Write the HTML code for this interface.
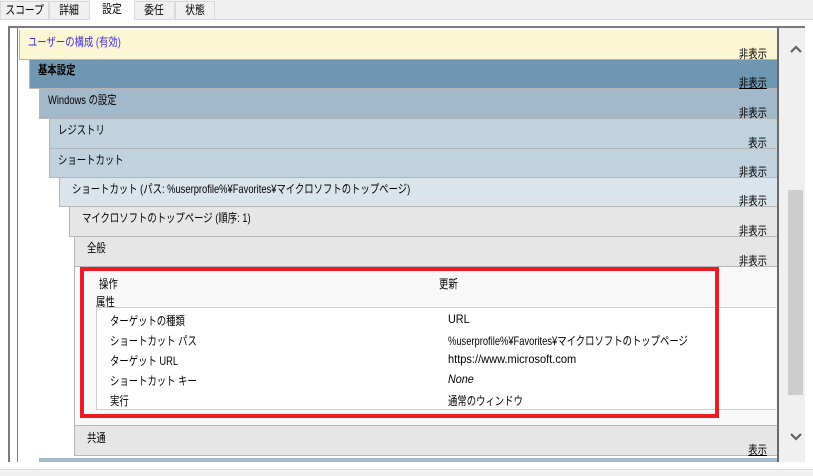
<!DOCTYPE html>
<html><head><meta charset="utf-8"><style>
*{margin:0;padding:0;box-sizing:border-box}
body{width:813px;height:476px;background:#fff;position:relative;overflow:hidden;font-family:"Liberation Sans","Noto Sans CJK JP",sans-serif;font-size:12px;color:#000}
.a{position:absolute;white-space:nowrap}
.s{display:inline-block;transform:scaleX(.78);transform-origin:left center;white-space:nowrap}
.sr{display:inline-block;transform:scaleX(.78);transform-origin:right center;white-space:nowrap}
.tab{position:absolute;top:1px;height:18px;background:#f0f0f0;border:1px solid #d9d9d9;border-bottom:none;font-size:12px;line-height:17px;text-align:center;white-space:nowrap;overflow:hidden}
.tab span,.tabw span{display:inline-block;transform:scaleX(.82)}
.row{position:absolute;border-bottom:1px solid #b4b4b4;border-left:1px solid #b4b4b4}
.row .t{position:absolute;left:8px;top:3px}
.row .r{position:absolute;right:10px;bottom:-3px;font-size:12px}
.u{text-decoration:underline}
.tr{position:absolute;left:14px;width:300px}
.tv{position:absolute;left:352px;width:330px}
</style></head><body>
<div class="a" style="left:0;top:0;width:813px;height:20px;background:#f0f0f0;border-bottom:1px solid #dadada"></div>
<div class="tab" style="left:0;width:49px"><span>スコープ</span></div>
<div class="tab" style="left:49px;width:41px"><span>詳細</span></div>
<div class="a tabw" style="left:90px;top:0;width:44px;height:21px;background:#fff;text-align:center;line-height:18px"><span>設定</span></div>
<div class="tab" style="left:134px;width:41px"><span>委任</span></div>
<div class="tab" style="left:175px;width:40px"><span>状態</span></div>
<div class="a" style="left:0;top:469px;width:813px;height:7px;background:#f0f0f0;border-top:1px solid #dadada"></div>
<div class="a" style="left:8px;top:26px;width:797px;height:2px;background:#7a7a7a"></div>
<div class="a" style="left:8px;top:26px;width:2px;height:436px;background:#7a7a7a"></div>
<div class="a" style="left:17px;top:28px;width:1px;height:434px;background:#7a7a7a"></div>
<div class="a" style="left:777px;top:28px;width:2px;height:434px;background:#6a6a6a"></div>
<div class="a" style="left:779px;top:28px;width:26px;height:434px;background:#f0f0f0"></div>
<div class="a" style="left:788px;top:190px;width:15px;height:205px;background:#cdcdcd"></div>
<svg class="a" style="left:789px;top:44px" width="14" height="10"><path d="M2 8 L7 3 L12 8" stroke="#606060" stroke-width="2.2" fill="none"/></svg>
<svg class="a" style="left:789px;top:432px" width="14" height="10"><path d="M2 2 L7 7 L12 2" stroke="#606060" stroke-width="2.2" fill="none"/></svg>
<div class="row" style="left:19px;top:30px;width:758px;height:30px;background:#fdf6d4"><span class="t s" style="color:#3f2fd8">ユーザーの構成 (有効)</span><span class="r sr">非表示</span></div>
<div class="row" style="left:29px;top:60px;width:748px;height:29px;background:#7097b1"><span class="t s" style="font-weight:bold;top:1px">基本設定</span><span class="r sr u">非表示</span></div>
<div class="row" style="left:39px;top:89px;width:738px;height:30px;background:#a2b8cb"><span class="t s" style="top:2px">Windows の設定</span><span class="r sr">非表示</span></div>
<div class="row" style="left:49px;top:119px;width:728px;height:30px;background:#c0d2de"><span class="t s" style="top:2px">レジストリ</span><span class="r sr">表示</span></div>
<div class="row" style="left:49px;top:149px;width:728px;height:29px;background:#c0d2de"><span class="t s" style="top:2px">ショートカット</span><span class="r sr">非表示</span></div>
<div class="row" style="left:59px;top:178px;width:718px;height:29px;background:#dae4eb"><span class="t s" style="left:12px;top:2px">ショートカット (パス: %userprofile%¥Favorites¥マイクロソフトのトップページ)</span><span class="r sr">非表示</span></div>
<div class="row" style="left:69px;top:207px;width:708px;height:30px;background:#e6e6e6"><span class="t s" style="left:12px;top:2px">マイクロソフトのトップページ (順序: 1)</span><span class="r sr">非表示</span></div>
<div class="row" style="left:74px;top:237px;width:703px;height:30px;background:#e6e6e6"><span class="t s" style="left:12px;top:2px">全般</span><span class="r sr">非表示</span></div>
<div class="a" style="left:74px;top:267px;width:703px;height:158px;background:#f8f8f8;border-left:1px solid #b4b4b4"></div>
<div class="a s" style="left:99px;top:275px">操作</div>
<div class="a s" style="left:439px;top:275px">更新</div>
<div class="a s" style="left:96px;top:293px">属性</div>
<div class="a" style="left:96px;top:307px;width:680px;height:103px;background:#fff;border:1px solid #ccc;border-right:none"></div>
<div class="a" style="left:96px;top:312px;width:680px">
<div class="tr s" style="top:0">ターゲットの種類</div><div class="tv s" style="top:0;transform:scaleX(.9)">URL</div>
<div class="tr s" style="top:20px">ショートカット パス</div><div class="tv s" style="top:20px">%userprofile%¥Favorites¥マイクロソフトのトップページ</div>
<div class="tr s" style="top:40px">ターゲット URL</div><div class="tv s" style="top:40px;transform:scaleX(.92)">https://www.microsoft.com</div>
<div class="tr s" style="top:60px">ショートカット キー</div><div class="tv s" style="top:60px;font-style:italic;transform:scaleX(.9)">None</div>
<div class="tr s" style="top:80px">実行</div><div class="tv s" style="top:80px">通常のウィンドウ</div>
</div>
<div class="a" style="left:80px;top:267px;width:639px;height:151px;border:4px solid #ed1c24"></div>
<div class="row" style="left:74px;top:425px;width:703px;height:31px;background:#e6e6e6;border-top:1px solid #b4b4b4"><span class="t s" style="left:12px">共通</span><span class="r sr u">表示</span></div>
<div class="a" style="left:39px;top:458px;width:738px;height:4px;background:#a2b8cb"></div>
</body></html>
